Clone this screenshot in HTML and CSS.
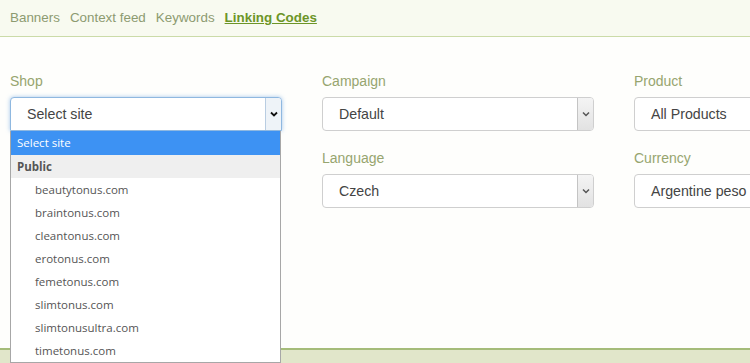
FILE: index.html
```html
<!DOCTYPE html>
<html lang="en">
<head>
  <meta charset="UTF-8" />
  <title>Linking Codes</title>
  <link rel="stylesheet" href="styles.css">
</head>
<body>
  <div class="topnav">
    <a href="#">Banners</a>
    <a href="#">Context feed</a>
    <a href="#">Keywords</a>
    <a href="#" class="active">Linking Codes</a>
  </div>

  <div class="content">
    <div class="form-grid">
      <div class="field shop">
        <label>Shop</label>
        <div class="select focus">
          <span>Select site</span>
          <i class="arrow"><svg width="8" height="6" viewBox="0 0 8 6"><path d="M1 1.5 L4 4.5 L7 1.5" fill="none" stroke="#111" stroke-width="1.8"/></svg></i>
        </div>
        <ul class="dropdown">
          <li class="picked">Select site</li>
          <li class="group">Public</li>
          <li>beautytonus.com</li>
          <li>braintonus.com</li>
          <li>cleantonus.com</li>
          <li>erotonus.com</li>
          <li>femetonus.com</li>
          <li>slimtonus.com</li>
          <li>slimtonusultra.com</li>
          <li>timetonus.com</li>
        </ul>
      </div>

      <div class="field">
        <label>Campaign</label>
        <div class="select">
          <span>Default</span>
          <i class="arrow"><svg width="8" height="6" viewBox="0 0 8 6"><path d="M1 1.5 L4 4.5 L7 1.5" fill="none" stroke="#555" stroke-width="1.5"/></svg></i>
        </div>
      </div>

      <div class="field">
        <label>Product</label>
        <div class="select">
          <span>All Products</span>
          <i class="arrow"><svg width="8" height="6" viewBox="0 0 8 6"><path d="M1 1.5 L4 4.5 L7 1.5" fill="none" stroke="#555" stroke-width="1.5"/></svg></i>
        </div>
      </div>

      <div class="field"></div>

      <div class="field">
        <label>Language</label>
        <div class="select">
          <span>Czech</span>
          <i class="arrow"><svg width="8" height="6" viewBox="0 0 8 6"><path d="M1 1.5 L4 4.5 L7 1.5" fill="none" stroke="#555" stroke-width="1.5"/></svg></i>
        </div>
      </div>

      <div class="field">
        <label>Currency</label>
        <div class="select">
          <span>Argentine peso</span>
          <i class="arrow"><svg width="8" height="6" viewBox="0 0 8 6"><path d="M1 1.5 L4 4.5 L7 1.5" fill="none" stroke="#555" stroke-width="1.5"/></svg></i>
        </div>
      </div>
    </div>
  </div>

  <div class="footer"></div>
</body>
</html>
```

FILE: styles.css
```css
body {
  margin: 0;
  font-family: "Liberation Sans", Arial, sans-serif;
  background: #fefefc;
  width: 750px;
  height: 363px;
  overflow: hidden;
}
.topnav {
  height: 35px;
  background: #f8faf0;
  border-bottom: 1px solid #cbdba8;
  padding: 0 10px 1px;
  display: flex;
  align-items: center;
  gap: 10px;
  font-size: 13.4px;
}
.topnav a {
  color: #8d9b70;
  text-decoration: none;
}
.topnav a.active {
  color: #6c9527;
  font-weight: bold;
  text-decoration: underline;
}
.content {
  height: 275px;
  padding: 36px 0 0 10px;
}
.form-grid {
  display: grid;
  grid-template-columns: 272px 272px 272px;
  column-gap: 40px;
  row-gap: 19px;
  width: 900px;
}
.field {
  position: relative;
}
.field label {
  display: block;
  font-size: 14px;
  line-height: 16px;
  color: #97a56f;
  margin-bottom: 8px;
}
.select {
  height: 32px;
  border: 1px solid #cfcfcf;
  border-radius: 4px;
  background: #fff;
  display: flex;
  align-items: center;
  justify-content: space-between;
  font-size: 14.2px;
  color: #444;
  overflow: hidden;
}
.select span {
  padding-left: 16px;
}
.select .arrow {
  width: 15px;
  height: 100%;
  border-left: 1px solid #c4c4c4;
  background: linear-gradient(#f4f4f4, #e2e2e2);
  display: flex;
  align-items: center;
  justify-content: center;
}
.select.focus {
  border-color: #8fb8e0;
  box-shadow: 0 0 4px rgba(102, 160, 225, 0.6);
  border-radius: 4px 4px 0 0;
}
.select.focus .arrow {
  background: #eef3f8;
  border-left-color: #b9cde2;
}
.dropdown {
  position: absolute;
  left: 0;
  top: 58px;
  width: 269px;
  margin: 0;
  padding: 0;
  list-style: none;
  background: #fff;
  border: 1px solid #a7a7a7;
  border-top: none;
  font-family: "Open Sans", sans-serif;
  font-size: 11.5px;
  color: #555;
  z-index: 2;
}
.dropdown li {
  height: 23px;
  line-height: 23px;
  padding-left: 24px;
}
.dropdown li.picked {
  height: 24px;
  line-height: 24px;
  background: #3d92f3;
  color: #fff;
  padding-left: 6px;
}
.dropdown li.group {
  background: #efefef;
  color: #555;
  font-weight: bold;
  padding-left: 6px;
}
.footer {
  height: 51px;
  border-top: 2px solid #a5bc79;
  background: #e1e6ca;
}
```
